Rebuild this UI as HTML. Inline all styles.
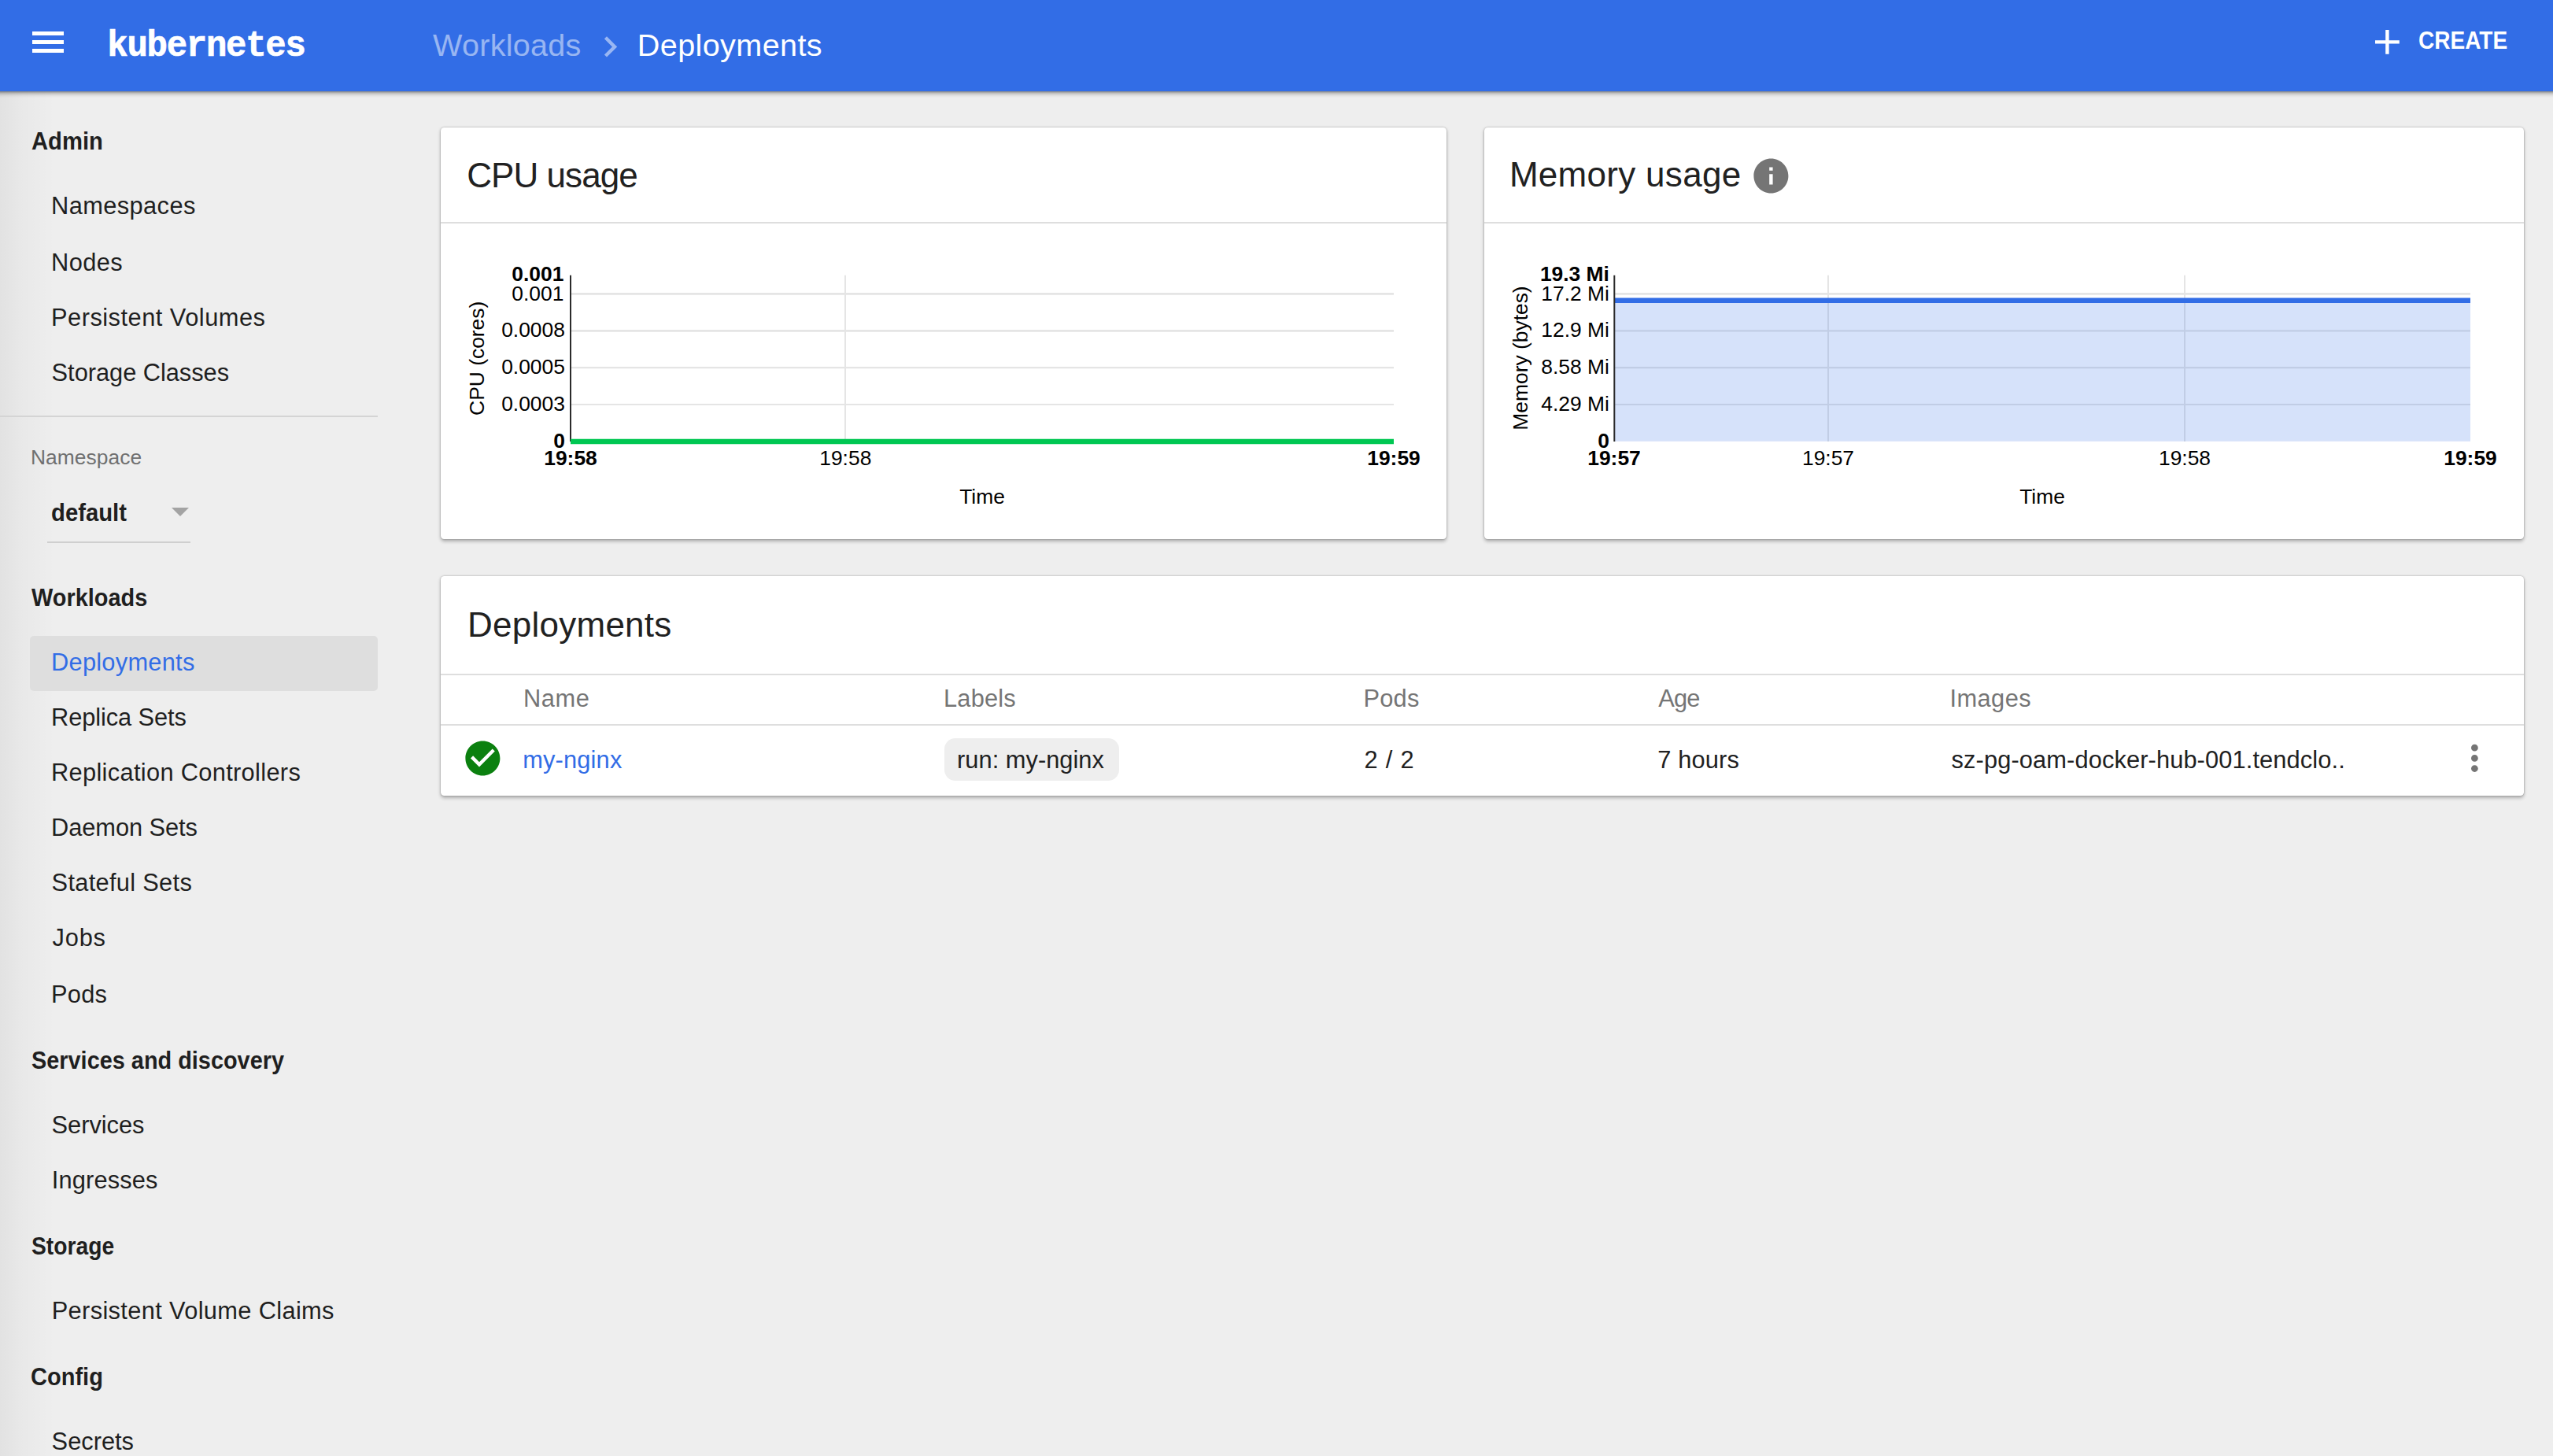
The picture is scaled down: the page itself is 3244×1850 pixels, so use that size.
<!DOCTYPE html>
<html lang="en">
<head>
<meta charset="utf-8">
<title>Deployments - Kubernetes Dashboard</title>
<style>
  html, body { margin: 0; padding: 0; }
  body {
    width: 3244px; height: 1850px; overflow: hidden; position: relative;
    background: #eeeeee;
    font-family: "Liberation Sans", sans-serif;
  }
  .t { position: absolute; white-space: nowrap; margin: 0; padding: 0; font-weight: 400; display: block; }
  .abs { position: absolute; }

  /* toolbar */
  header {
    position: absolute; left: -30px; top: 0; width: 3304px; height: 116px; padding: 0; box-sizing: border-box;
    background: #326de6;
    box-shadow: 0 3px 5px rgba(0,0,0,0.32), 0 1px 2px rgba(0,0,0,0.25);
    z-index: 5;
  }
  .bar { position: absolute; left: 41px; width: 40.4px; height: 4.7px; background: #fff; }

  /* nav */
  nav { position: absolute; left: 0; top: 116px; width: 480px; height: 1734px; }
  nav .edge {
    position: absolute; left: 0; top: 0; width: 70px; height: 1734px;
    background: linear-gradient(to right, rgba(0,0,0,0.05), rgba(0,0,0,0.025) 40%, rgba(0,0,0,0));
  }
  .navdiv { position: absolute; left: 0; top: 412px; width: 480px; height: 2px; background: #d4d4d4; }
  .sel { position: absolute; left: 38px; top: 692.3px; width: 442px; height: 69.6px; border-radius: 5px; background: #dedede; }
  .nsline { position: absolute; left: 60px; top: 572px; width: 182px; height: 2px; background: #cfcfcf; }
  .nsarrow { position: absolute; left: 217.8px; top: 529px; width: 0; height: 0;
    border-left: 11.1px solid transparent; border-right: 11.1px solid transparent; border-top: 11.4px solid #a3a3a3; }

  /* cards */
  .card {
    position: absolute; background: #fff; border-radius: 4.4px;
    box-shadow: 0 2.2px 4.4px rgba(0,0,0,0.26), 0 0 3px rgba(0,0,0,0.16), 0 0 0 0.8px rgba(0,0,0,0.05);
  }
  .hr { position: absolute; left: 0; height: 2px; background: #dedede; }
  .chip { position: absolute; left: 1200px; top: 938px; width: 222px; height: 53.6px; border-radius: 14px; background: #eeeeee; }
  main { position: absolute; left: 0; top: 0; width: 3244px; height: 1850px; }
</style>
</head>
<body>

<header>
 <div style="position:absolute;left:30px;top:0;width:3244px;height:116px">
  <div class="bar" style="top:40.2px"></div>
  <div class="bar" style="top:51.2px"></div>
  <div class="bar" style="top:62.2px"></div>
  <!-- chevron -->
  <svg class="abs" style="left:749.3px;top:33.2px" width="52.8" height="52.8" viewBox="0 0 24 24"><path d="M10 6L8.59 7.41 13.17 12l-4.58 4.59L10 18l6-6z" fill="#ffffff" fill-opacity="0.5"/></svg>
  <!-- plus -->
  <svg class="abs" style="left:3007.3px;top:27.1px" width="52.8" height="52.8" viewBox="0 0 24 24"><path d="M19 13h-6v6h-2v-6H5v-2h6V5h2v6h6v2z" fill="#ffffff"/></svg>
<span class="t" style="left:550.00px;top:38.00px;font-size:39.6px;line-height:39.6px;letter-spacing:0.269px;color:rgba(255,255,255,0.5);">Workloads</span>
<span class="t" style="left:809.80px;top:38.00px;font-size:39.6px;line-height:39.6px;letter-spacing:0.381px;color:#ffffff;">Deployments</span>
<span class="t" style="left:3072.59px;top:37.00px;font-size:30.8px;line-height:30.8px;letter-spacing:0.000px;color:#ffffff;font-weight:700;transform:scaleX(0.9105);transform-origin:0 0;">CREATE</span>
<span class="t" style="left:136.30px;top:36.60px;font-size:44.0px;line-height:44.0px;letter-spacing:-1.271px;color:#ffffff;font-weight:700;transform:scaleY(1.06);transform-origin:0 34.00px;-webkit-text-stroke:0.7px #ffffff;font-family:'Liberation Mono', monospace;">kubernetes</span>
 </div>
</header>

<nav>
  <div class="edge"></div>
  <div class="navdiv"></div>
  <div class="sel"></div>
  <div class="nsline"></div>
  <div class="nsarrow"></div>
</nav>
<div id="navtext" style="position:absolute;left:0;top:0">
<span class="t" style="left:39.60px;top:165.00px;font-size:30.8px;line-height:30.8px;letter-spacing:0.000px;color:#1f1f1f;font-weight:700;transform:scaleX(0.9490);transform-origin:0 0;">Admin</span>
<span class="t" style="left:40.20px;top:745.00px;font-size:30.8px;line-height:30.8px;letter-spacing:0.000px;color:#1f1f1f;font-weight:700;transform:scaleX(0.9387);transform-origin:0 0;">Workloads</span>
<span class="t" style="left:40.20px;top:1333.00px;font-size:30.8px;line-height:30.8px;letter-spacing:0.000px;color:#1f1f1f;font-weight:700;transform:scaleX(0.9376);transform-origin:0 0;">Services and discovery</span>
<span class="t" style="left:40.20px;top:1569.00px;font-size:30.8px;line-height:30.8px;letter-spacing:0.000px;color:#1f1f1f;font-weight:700;transform:scaleX(0.9168);transform-origin:0 0;">Storage</span>
<span class="t" style="left:39.26px;top:1735.00px;font-size:30.8px;line-height:30.8px;letter-spacing:0.000px;color:#1f1f1f;font-weight:700;transform:scaleX(0.9422);transform-origin:0 0;">Config</span>
<span class="t" style="left:65.00px;top:247.00px;font-size:30.8px;line-height:30.8px;letter-spacing:0.397px;color:#1f1f1f;">Namespaces</span>
<span class="t" style="left:65.00px;top:319.00px;font-size:30.8px;line-height:30.8px;letter-spacing:0.394px;color:#1f1f1f;">Nodes</span>
<span class="t" style="left:65.00px;top:389.00px;font-size:30.8px;line-height:30.8px;letter-spacing:0.488px;color:#1f1f1f;">Persistent Volumes</span>
<span class="t" style="left:65.60px;top:459.00px;font-size:30.8px;line-height:30.8px;letter-spacing:-0.033px;color:#1f1f1f;">Storage Classes</span>
<span class="t" style="left:38.90px;top:568.00px;font-size:26.4px;line-height:26.4px;letter-spacing:0.057px;color:#707070;">Namespace</span>
<span class="t" style="left:64.95px;top:637.00px;font-size:30.8px;line-height:30.8px;letter-spacing:0.000px;color:#1f1f1f;font-weight:700;transform:scaleX(0.9509);transform-origin:0 0;">default</span>
<span class="t" style="left:65.00px;top:827.00px;font-size:30.8px;line-height:30.8px;letter-spacing:0.257px;color:#326de6;">Deployments</span>
<span class="t" style="left:65.00px;top:897.00px;font-size:30.8px;line-height:30.8px;letter-spacing:-0.081px;color:#1f1f1f;">Replica Sets</span>
<span class="t" style="left:65.00px;top:967.00px;font-size:30.8px;line-height:30.8px;letter-spacing:0.317px;color:#1f1f1f;">Replication Controllers</span>
<span class="t" style="left:65.00px;top:1037.00px;font-size:30.8px;line-height:30.8px;letter-spacing:-0.059px;color:#1f1f1f;">Daemon Sets</span>
<span class="t" style="left:65.60px;top:1107.00px;font-size:30.8px;line-height:30.8px;letter-spacing:0.299px;color:#1f1f1f;">Stateful Sets</span>
<span class="t" style="left:66.60px;top:1177.00px;font-size:30.8px;line-height:30.8px;letter-spacing:0.782px;color:#1f1f1f;">Jobs</span>
<span class="t" style="left:65.00px;top:1249.00px;font-size:30.8px;line-height:30.8px;letter-spacing:0.268px;color:#1f1f1f;">Pods</span>
<span class="t" style="left:65.60px;top:1415.00px;font-size:30.8px;line-height:30.8px;letter-spacing:-0.042px;color:#1f1f1f;">Services</span>
<span class="t" style="left:65.70px;top:1485.00px;font-size:30.8px;line-height:30.8px;letter-spacing:0.160px;color:#1f1f1f;">Ingresses</span>
<span class="t" style="left:65.70px;top:1651.00px;font-size:30.8px;line-height:30.8px;letter-spacing:0.345px;color:#1f1f1f;">Persistent Volume Claims</span>
<span class="t" style="left:65.60px;top:1817.00px;font-size:30.8px;line-height:30.8px;letter-spacing:-0.001px;color:#1f1f1f;">Secrets</span>
</div>

<main>
  <section class="card" style="left:560px;top:162px;width:1278px;height:523px"><div class="hr" style="top:120px;width:1278px"></div></section>
  <section class="card" style="left:1886px;top:162px;width:1321px;height:523px"><div class="hr" style="top:120px;width:1321px"></div></section>
  <section class="card" style="left:560px;top:732px;width:2647px;height:279px">
    <div class="hr" style="top:124px;width:2647px"></div>
    <div class="hr" style="top:188px;width:2647px"></div>
  </section>
  <div class="chip"></div>
  <!-- info icon -->
  <svg class="abs" style="left:2223.6px;top:197.1px" width="52.8" height="52.8" viewBox="0 0 24 24"><path d="M12 2C6.48 2 2 6.48 2 12s4.48 10 10 10 10-4.48 10-10S17.52 2 12 2zm1 15h-2v-6h2v6zm0-8h-2V7h2v2z" fill="#757575"/></svg>
  <!-- success icon -->
  <svg class="abs" style="left:586.5px;top:937.1px" width="52.8" height="52.8" viewBox="0 0 24 24"><path d="M12 2C6.48 2 2 6.48 2 12s4.48 10 10 10 10-4.48 10-10S17.52 2 12 2zm-2 15l-5-5 1.41-1.41L10 14.17l7.59-7.59L19 8l-9 9z" fill="#0b800f"/></svg>
  <!-- more vert -->
  <svg class="abs" style="left:3118px;top:937.1px" width="52.8" height="52.8" viewBox="0 0 24 24"><path d="M12 8c1.1 0 2-.9 2-2s-.9-2-2-2-2 .9-2 2 .9 2 2 2zm0 2c-1.1 0-2 .9-2 2s.9 2 2 2 2-.9 2-2-.9-2-2-2zm0 6c-1.1 0-2 .9-2 2s.9 2 2 2 2-.9 2-2-.9-2-2-2z" fill="#757575"/></svg>
  <svg class="abs" style="left:0;top:0" width="3244" height="700" viewBox="0 0 3244 700" font-family="'Liberation Sans', sans-serif" font-size="26.4" fill="#000">
    <!-- ================= CPU chart ================= -->
    <g id="cpu-chart">
      <g stroke="#e5e5e5" fill="none">
        <line x1="725" x2="1771" y1="373.3" y2="373.3" stroke-width="2.8"/>
        <line x1="725" x2="1771" y1="420.3" y2="420.3" stroke-width="2.8"/>
        <line x1="725" x2="1771" y1="467.1" y2="467.1" stroke-width="2.2"/>
        <line x1="725" x2="1771" y1="514" y2="514" stroke-width="2.2"/>
        <line x1="1074" x2="1074" y1="349.8" y2="561" stroke-width="2"/>
      </g>
      <line x1="725" x2="725" y1="349.8" y2="561" stroke="#2b2b2b" stroke-width="2"/>
      <line x1="725" x2="1771" y1="561.1" y2="561.1" stroke="#00c752" stroke-width="6.5"/>
      <g text-anchor="end">
        <text x="716.4" y="357.3" font-weight="700">0.001</text>
        <text x="716.4" y="381.9">0.001</text>
        <text x="717.9" y="428.3">0.0008</text>
        <text x="717.9" y="475.2">0.0005</text>
        <text x="717.9" y="522.1">0.0003</text>
        <text x="717.9" y="568.9" font-weight="700">0</text>
      </g>
      <g text-anchor="middle">
        <text x="725" y="590.7" font-weight="700">19:58</text>
        <text x="1074.3" y="590.7">19:58</text>
        <text x="1771" y="590.7" font-weight="700">19:59</text>
        <text x="1248" y="640">Time</text>
        <text transform="translate(615.4 455.3) rotate(-90)">CPU (cores)</text>
      </g>
    </g>
    <!-- ================= Memory chart ================= -->
    <g id="mem-chart">
      <g stroke="#e5e5e5" fill="none">
        <line x1="2051" x2="3139" y1="373.3" y2="373.3" stroke-width="2.8"/>
        <line x1="2051" x2="3139" y1="420.3" y2="420.3" stroke-width="2.2"/>
        <line x1="2051" x2="3139" y1="467.1" y2="467.1" stroke-width="2.2"/>
        <line x1="2051" x2="3139" y1="514" y2="514" stroke-width="2.2"/>
        <line x1="2323" x2="2323" y1="349.8" y2="561" stroke-width="2"/>
        <line x1="2776" x2="2776" y1="349.8" y2="561" stroke-width="2"/>
      </g>
      <rect x="2051" y="381.7" width="1088" height="179.1" fill="#326de6" fill-opacity="0.2"/>
      <line x1="2051" x2="3139" y1="381.7" y2="381.7" stroke="#326de6" stroke-width="6.4"/>
      <line x1="2051.3" x2="2051.3" y1="349.8" y2="561" stroke="#2b2b2b" stroke-width="2"/>
      <g text-anchor="end">
        <text x="2044.9" y="357" font-weight="700">19.3 Mi</text>
        <text x="2044.9" y="381.5">17.2 Mi</text>
        <text x="2044.9" y="428.3">12.9 Mi</text>
        <text x="2044.9" y="475.2">8.58 Mi</text>
        <text x="2044.9" y="522.1">4.29 Mi</text>
        <text x="2044.9" y="569" font-weight="700">0</text>
      </g>
      <g text-anchor="middle">
        <text x="2051" y="590.7" font-weight="700">19:57</text>
        <text x="2323" y="590.7">19:57</text>
        <text x="2776" y="590.7">19:58</text>
        <text x="3139" y="590.7" font-weight="700">19:59</text>
        <text x="2595" y="640">Time</text>
        <text transform="translate(1941.1 455) rotate(-90)">Memory (bytes)</text>
      </g>
    </g>
  </svg>

<span class="t" style="left:593.20px;top:201.00px;font-size:44px;line-height:44px;letter-spacing:-0.942px;color:#212121;">CPU usage</span>
<span class="t" style="left:1917.90px;top:200.00px;font-size:44px;line-height:44px;letter-spacing:0.297px;color:#212121;">Memory usage</span>
<span class="t" style="left:594.10px;top:772.00px;font-size:44px;line-height:44px;letter-spacing:0.242px;color:#212121;">Deployments</span>
<span class="t" style="left:664.90px;top:873.00px;font-size:30.8px;line-height:30.8px;letter-spacing:0.626px;color:#757575;">Name</span>
<span class="t" style="left:1199.10px;top:873.00px;font-size:30.8px;line-height:30.8px;letter-spacing:0.149px;color:#757575;">Labels</span>
<span class="t" style="left:1732.40px;top:873.00px;font-size:30.8px;line-height:30.8px;letter-spacing:0.268px;color:#757575;">Pods</span>
<span class="t" style="left:2107.20px;top:873.00px;font-size:30.8px;line-height:30.8px;letter-spacing:-0.785px;color:#757575;">Age</span>
<span class="t" style="left:2477.50px;top:873.00px;font-size:30.8px;line-height:30.8px;letter-spacing:0.421px;color:#757575;">Images</span>
<span class="t" style="left:664.20px;top:951.00px;font-size:30.8px;line-height:30.8px;letter-spacing:0.167px;color:#326de6;">my-nginx</span>
<span class="t" style="left:1216.10px;top:951.00px;font-size:30.8px;line-height:30.8px;letter-spacing:0.020px;color:#212121;">run: my-nginx</span>
<span class="t" style="left:1733.40px;top:951.00px;font-size:30.8px;line-height:30.8px;letter-spacing:0.851px;color:#212121;">2 / 2</span>
<span class="t" style="left:2106.20px;top:951.00px;font-size:30.8px;line-height:30.8px;letter-spacing:0.146px;color:#212121;">7 hours</span>
<span class="t" style="left:2479.50px;top:951.00px;font-size:30.8px;line-height:30.8px;letter-spacing:0.116px;color:#212121;">sz-pg-oam-docker-hub-001.tendclo..</span>
</main>

</body>
</html>
